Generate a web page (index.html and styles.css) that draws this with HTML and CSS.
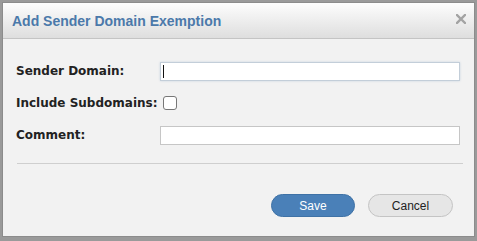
FILE: index.html
```html
<!DOCTYPE html>
<html lang="en">
<head>
    <meta charset="UTF-8">
    <title>Add Sender Domain Exemption</title>
    <link rel="stylesheet" href="styles.css">
</head>
<body>
    <div class="dialog">
        <div class="dialog-header">
            <h2>Add Sender Domain Exemption</h2>
            <svg class="close-btn" width="10" height="10" viewBox="0 0 10 10">
                <path d="M1 1 L9 9 M9 1 L1 9" stroke="#a3a3a3" stroke-width="2.4" stroke-linecap="square"/>
            </svg>
        </div>
        <div class="dialog-body">
            <div class="form-row">
                <label class="form-label">Sender Domain:</label>
                <span class="input-wrap">
                    <input type="text" class="text-input focused">
                    <span class="caret"></span>
                </span>
            </div>
            <div class="form-row">
                <label class="form-label">Include Subdomains:</label>
                <span class="check-box"></span>
            </div>
            <div class="form-row">
                <label class="form-label">Comment:</label>
                <input type="text" class="text-input">
            </div>
            <div class="separator"></div>
            <div class="button-row">
                <button class="btn btn-primary">Save</button>
                <button class="btn btn-default">Cancel</button>
            </div>
        </div>
    </div>
</body>
</html>
```

FILE: styles.css
```css
body {
    margin: 0;
    padding: 2px;
    background: #9a9a9a;
    font-family: "Liberation Sans", Arial, sans-serif;
    height: 239px;
    box-sizing: border-box;
}
.dialog {
    background: #f2f2f2;
    border: 1px solid #8c8c8c;
    height: 100%;
    box-sizing: border-box;
    display: flex;
    flex-direction: column;
}
.dialog-header {
    height: 35px;
    background: linear-gradient(#fdfdfd, #dedede);
    border-bottom: 1px solid #c4c4c4;
    display: flex;
    align-items: center;
    justify-content: space-between;
    padding: 0 8px 0 9px;
}
.dialog-header h2 {
    margin: 0;
    font-size: 14px;
    font-weight: bold;
    color: #4b79aa;
}
.close-btn {
    margin-top: -3px;
}
.dialog-body {
    padding: 22px 13px 0 13px;
}
.form-row {
    display: flex;
    align-items: center;
    height: 20px;
    margin-bottom: 12px;
}
.form-label {
    width: 144px;
    flex: none;
    font-family: "DejaVu Sans", Verdana, sans-serif;
    font-size: 12px;
    font-weight: bold;
    color: #222;
}
.input-wrap {
    position: relative;
    display: flex;
}
.caret {
    position: absolute;
    left: 3px;
    top: 3px;
    width: 1px;
    height: 13px;
    background: #111;
}
.text-input {
    width: 300px;
    height: 19px;
    box-sizing: border-box;
    border: 1px solid #c6c6c6;
    background: #fff;
    margin: 0;
    padding: 0 4px;
}
.text-input.focused {
    border-color: #c3ced9;
    box-shadow: 0 0 2px #c8d4e0;
}
.check-box {
    width: 12px;
    height: 12px;
    border: 1px solid #777;
    border-radius: 3px;
    background: #fff;
    margin-left: 3px;
}
.separator {
    border-top: 1px solid #cfcfcf;
    margin: 18px 0 0 1px;
    width: 446px;
}
.button-row {
    display: flex;
    justify-content: flex-end;
    gap: 13px;
    margin-top: 30px;
    padding-right: 8px;
}
.btn {
    height: 23px;
    width: 84px;
    border-radius: 12px;
    font-family: "Liberation Sans", Arial, sans-serif;
    font-size: 12px;
    padding: 0;
}
.btn-primary {
    background: #4a80b8;
    border: 1px solid #3f72a6;
    color: #fff;
}
.btn-default {
    background: #e6e6e6;
    border: 1px solid #c4c4c4;
    color: #222;
    width: 85px;
}
```
